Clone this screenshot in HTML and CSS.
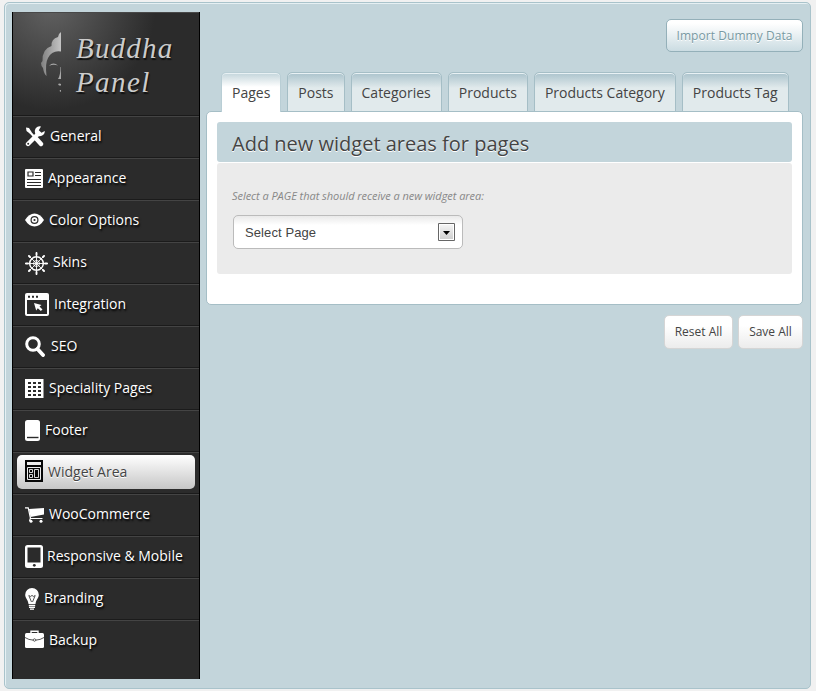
FILE: index.html
```html
<!DOCTYPE html>
<html lang="en">
<head>
<meta charset="utf-8">
<title>Buddha Panel</title>
<link rel="stylesheet" href="styles.css">
</head>
<body>
<div class="shell">
  <aside class="sidebar">
    <div class="brand">
      <svg class="brand-face" width="20" height="62" viewBox="0 0 20 62">
        <defs><linearGradient id="face" x1="0" x2="1"><stop offset="0" stop-color="#808080"/><stop offset="1" stop-color="#c4c4c4"/></linearGradient></defs>
        <path fill="url(#face)" d="M20 0V19.500Q11 18 7 26Q4 31 5.500 44Q3 42 2 36Q0 34 0 31L1.500 29Q1 17 10.500 14Q10 7 17 5Q17 2 20 0Z"/>
        <path fill="#a8a8a8" d="M8 34Q12 29.500 17 33.500Q12 32 8 34ZM20 35V47H17Q19.500 43 19.500 35ZM17 52Q18.500 51 20 52V53.500H18ZM18.500 59Q19 57.500 20 58V60Z"/>
      </svg>
      <div class="brand-name"><span class="brand-line">Buddha</span><span class="brand-line second">Panel</span></div>
    </div>
    <nav class="menu">
      <a class="item"><svg width="20" height="21" viewBox="0 0 20 21"><path d="M3 4L15.500 17.500" stroke="#fff" stroke-width="2.200"/><path d="M1 1.500L4 2L6.500 6L5 7.500L1.500 5Z" fill="#fff"/><path d="M11.500 13L16 18" stroke="#fff" stroke-width="4.400" stroke-linecap="round"/><path d="M3 18L13 8" stroke="#fff" stroke-width="4.400" stroke-linecap="round"/><path d="M16 .4A5 5 0 1 0 19.800 5L16.500 6.800L13.800 4.200Z" fill="#fff"/><circle cx="3.200" cy="17.800" r="1" fill="#2b2b2b"/></svg><span>General</span></a>
      <a class="item"><svg width="18" height="19" viewBox="0 0 18 19"><rect width="18" height="19" rx="1" fill="#fff"/><path d="M3 3H8V7H3ZM10 3.500H16M10 6.500H16M2 10.500H16M2 13.500H16M2 16.500H16" fill="none" stroke="#2b2b2b" stroke-width="1.200"/></svg><span>Appearance</span></a>
      <a class="item eye"><svg width="19" height="14" viewBox="0 0 19 14"><path d="M0 7Q4 .5 9.500 .5T19 7Q15 13.500 9.500 13.500T0 7Z" fill="#fff"/><circle cx="9.500" cy="7" r="4" fill="#2b2b2b"/><circle cx="9.500" cy="7" r="2.800" fill="#fff"/><circle cx="9.500" cy="7" r="1.100" fill="#2b2b2b"/></svg><span>Color Options</span></a>
      <a class="item skins"><svg width="23" height="23" viewBox="0 0 23 23"><g fill="none" stroke="#fff"><circle cx="11.500" cy="11.500" r="6.800" stroke-width="1.500"/><circle cx="11.500" cy="11.500" r="3" stroke-width=".9"/><path d="M11.500 0V23M0 11.500H23M3.700 3.700L19.300 19.300M19.300 3.700L3.700 19.300" stroke-width=".9"/></g><path d="M11.500 1V3M11.500 20V22M1 11.500H3M20 11.500H22M4 4L5 5M18 18L19 19M19 4L18 5M5 18L4 19" stroke="#fff" stroke-width="1.900" stroke-linecap="round"/></svg><span>Skins</span></a>
      <a class="item integration"><svg width="24" height="23" viewBox="0 0 24 23"><rect width="24" height="23" rx="2" fill="#fff"/><path d="M2 7H22V21H2Z" fill="#2b2b2b"/><path d="M3 3.800H5M7 3.800H9M11 3.800H13" stroke="#2b2b2b" stroke-width="2"/><path d="M9 10L16.500 12L14.500 13.500L17.500 16.500L15.800 18L12.800 15.200L11.200 17.500Z" fill="#fff"/></svg><span>Integration</span></a>
      <a class="item"><svg width="20" height="21" viewBox="0 0 20 21"><circle cx="8" cy="8" r="6.300" fill="none" stroke="#fff" stroke-width="3"/><path d="M12.500 13L18 19" stroke="#fff" stroke-width="3.800" stroke-linecap="round"/></svg><span class="seo-label">SEO</span></a>
      <a class="item"><svg width="19" height="19" viewBox="0 0 19 19"><rect width="18.500" height="19" fill="#fff"/><path d="M3 4H16M3 8H16M3 12H16M3 16H16" stroke="#2b2b2b" stroke-width="2" stroke-dasharray="3 2"/></svg><span>Speciality Pages</span></a>
      <a class="item"><svg width="15" height="21" viewBox="0 0 15 21"><rect width="15" height="21" rx="2.500" fill="#fff"/><path d="M2 17.500H13.500" stroke="#2b2b2b" stroke-width="1.400"/></svg><span>Footer</span></a>
      <a class="item active"><svg width="18" height="22" viewBox="0 0 18 22"><rect width="18" height="22" fill="#080808"/><path d="M2 2H16V5H2Z" fill="#eee"/><path d="M2.500 7.500H15.500V19.500H2.500Z" fill="none" stroke="#eee"/><path d="M4.500 9.500H7.500V12.500H4.500ZM4.500 14.500H7.500V17.500H4.500ZM9.500 9.500H13.500V17.500H9.500Z" fill="none" stroke="#eee" stroke-width=".9"/></svg><span>Widget Area</span></a>
      <a class="item"><svg width="19" height="16" viewBox="0 0 19 16"><path d="M0 .8H3.200L5.500 11.500H17.500M5.500 11L4.500 14" fill="none" stroke="#fff" stroke-width="1.200"/><path d="M4 2L19 1V7.500L5.500 10Z" fill="#fff"/><circle cx="6" cy="14.300" r="1.500" fill="#fff"/><circle cx="16" cy="14.300" r="1.500" fill="#fff"/></svg><span>WooCommerce</span></a>
      <a class="item tablet"><svg width="18" height="23" viewBox="0 0 18 23"><rect width="18" height="23" rx="2.500" fill="#fff"/><path d="M2.500 2.500H15.500V17.500H2.500Z" fill="#2b2b2b"/><circle cx="9.300" cy="20.300" r="1.400" fill="#2b2b2b"/></svg><span>Responsive &amp; Mobile</span></a>
      <a class="item"><svg width="14" height="22" viewBox="0 0 14 22"><path d="M7 0A6.800 6.800 0 0 1 13.800 7C13.800 10 11 11.500 10.500 16H3.500C3 11.500 .2 10 .2 7A6.800 6.800 0 0 1 7 0Z" fill="#fff"/><path d="M6.500 14L3.800 7.500L5.700 8.500L7 7.300L8.300 8.500L10.200 7.500L7.500 14" fill="none" stroke="#444" stroke-width=".9"/><path d="M3.800 17.500H10.200M4 19.300H10M5 21.200H9" stroke="#fff" stroke-width="1.300"/></svg><span>Branding</span></a>
      <a class="item backup"><svg width="19" height="18" viewBox="0 0 19 18"><path d="M6 3.500V1.200H13V3.500" fill="none" stroke="#fff" stroke-width="1.400"/><rect y="3" width="19" height="15" rx="1.500" fill="#fff"/><path d="M0 7.500Q4 10 7.500 10M11.500 10Q15 10 19 7.500M7.500 10Q9.500 7.500 11.500 10Q9.500 12.500 7.500 10Z" fill="none" stroke="#444" stroke-width=".9"/></svg><span>Backup</span></a>
    </nav>
  </aside>
  <main class="main">
    <div class="top"><button class="btn import">Import Dummy Data</button></div>
    <div class="tabs">
      <a class="tab current">Pages</a><a class="tab">Posts</a><a class="tab">Categories</a><a class="tab">Products</a><a class="tab">Products Category</a><a class="tab">Products Tag</a>
    </div>
    <section class="card">
      <h2 class="card-title">Add new widget areas for pages</h2>
      <div class="card-body">
        <p class="hint">Select a PAGE that should receive a new widget area:</p>
        <div class="select"><span>Select Page</span><svg width="17" height="18" viewBox="0 0 17 18"><defs><linearGradient id="arrow" x2="0" y2="1"><stop offset="0" stop-color="#f4f4f4"/><stop offset="1" stop-color="#cfcfcf"/></linearGradient></defs><path d="M.5.500H16.500V17.500H.5Z" fill="#fff" stroke="#666"/><path d="M2 2H15V16H2Z" fill="url(#arrow)"/><path d="M5 8H12L8.500 12Z" fill="#000"/></svg></div>
      </div>
    </section>
    <div class="actions"><button class="btn reset">Reset All</button><button class="btn save">Save All</button></div>
  </main>
</div>
</body>
</html>
```
FILE: styles.css
```css
* { box-sizing: border-box; }

body {
  margin: 0;
  padding: 2px 4px;
  background: #f1f1f1;
  font-family: "Open Sans", sans-serif;
  color: #444;
}

.shell {
  display: flex;
  width: 807px;
  height: 687px;
  padding: 9px 7px;
  border: 1px solid #a9c3cb;
  border-radius: 5px;
  background: #c3d5db;
  box-shadow: inset 1px 1px 0 #e6f0f3;
}

.sidebar {
  width: 188px;
  height: 667px;
  border: solid #000;
  border-width: 0 1px;
  background: #2b2b2b;
}

.brand {
  display: flex;
  height: 104px;
  padding: 19px 0 0 28px;
  border-top: 1px solid #484848;
  border-bottom: 1px solid #1a1a1a;
  background: radial-gradient(circle at 38px -8px, #626262 0, #2b2b2b 105px);
}

.brand-name {
  margin: -1px 0 0 15px;
  font: italic 29px/34px "Liberation Serif", serif;
  color: #ccc;
  text-shadow: 1px 2px 1px #111;
}

.brand-line { display: block; letter-spacing: 1.2px; }
.second { letter-spacing: 1.4px; }

.item {
  display: flex;
  align-items: center;
  gap: 5px;
  height: 42px;
  padding: 0 0 1px 12px;
  border-top: 1px solid #444;
  border-bottom: 1px solid #1b1b1b;
  font-size: 14px;
  line-height: 20px;
  color: #fff;
  text-shadow: 1px 2px 2px #000;
}

.item span { margin-top: -2px; }
.item:last-child { border-bottom: 0; }
.item svg { flex: none; }
.eye svg { margin-top: -1px; }
.skins svg { margin-top: 2px; }
.integration svg { margin-top: -1px; }
.tablet svg { margin-right: -1px; }
.seo-label { margin-left: 1px; }
.backup svg { margin-top: -4px; }

.active {
  position: relative;
  z-index: 0;
  color: #444;
  text-shadow: 0 1px 0 #fff;
}

.active svg { margin-top: -3px; }

.active::before {
  content: "";
  position: absolute;
  z-index: -1;
  inset: 2px 4px 4px;
  border-radius: 5px;
  background: linear-gradient(#fff, #c6c6c6);
}

.main {
  width: 597px;
  margin-left: 6px;
  padding-top: 7px;
}

.top { display: flex; justify-content: flex-end; }

.btn {
  height: 34px;
  padding: 0 0 2px;
  border: 1px solid #d5d5d5;
  border-radius: 5px;
  background: linear-gradient(#fff 30%, #ececec);
  font: 12px "Open Sans", sans-serif;
  color: #444;
}

.import {
  width: 137px;
  height: 33px;
  padding: 0;
  border-color: #94b0b9;
  background: linear-gradient(#fff 10%, #cbdce2);
  font-size: 12px;
  letter-spacing: .05px;
  color: #7899a2;
  text-shadow: 0 1px 0 #fff;
}

.tabs {
  position: relative;
  z-index: 1;
  display: flex;
  gap: 6px;
  margin: 20px 0 -1px 15px;
}

.tab {
  height: 40px;
  padding: 11px 10px 0;
  border: 1px solid #a5bec6;
  border-radius: 5px 5px 0 0;
  background: linear-gradient(#abc3cc, #e1eaec 15px);
  box-shadow: inset 0 1px 0 #e8f1f4;
  font-size: 14px;
  line-height: 18px;
  white-space: nowrap;
}

.current {
  border-color: #b9ced5;
  border-bottom: 0;
  background: linear-gradient(#c3d5db, #fff 14px);
}

.card {
  height: 194px;
  padding: 10px 10px 0;
  border: 1px solid #a5bec6;
  border-radius: 5px;
  background: #fff;
}

.card-title {
  height: 40px;
  margin: 0 0 1px;
  padding-left: 15px;
  border-radius: 3px;
  background: #c3d5db;
  font-size: 20px;
  font-weight: 400;
  line-height: 43px;
  text-shadow: 0 1px 0 #fff;
}

.card-body {
  height: 111px;
  padding: 25px 15px 0;
  border-radius: 3px;
  background: #ebebeb;
}

.hint {
  margin: 0 0 11px;
  font-size: 11px;
  font-style: italic;
  letter-spacing: -.045px;
  line-height: 16px;
  color: #888;
}

.select {
  display: flex;
  align-items: center;
  justify-content: space-between;
  width: 230px;
  height: 34px;
  margin-left: 1px;
  padding: 0 7px 0 11px;
  border: 1px solid #bbb;
  border-radius: 5px;
  background: linear-gradient(#e9e9e9, #fff 9px);
  font: 13px "Liberation Sans", sans-serif;
  letter-spacing: .1px;
}

.actions {
  display: flex;
  justify-content: flex-end;
  gap: 5px;
  margin-top: 10px;
}

.reset { width: 69px; }
.save { width: 65px; }
```
